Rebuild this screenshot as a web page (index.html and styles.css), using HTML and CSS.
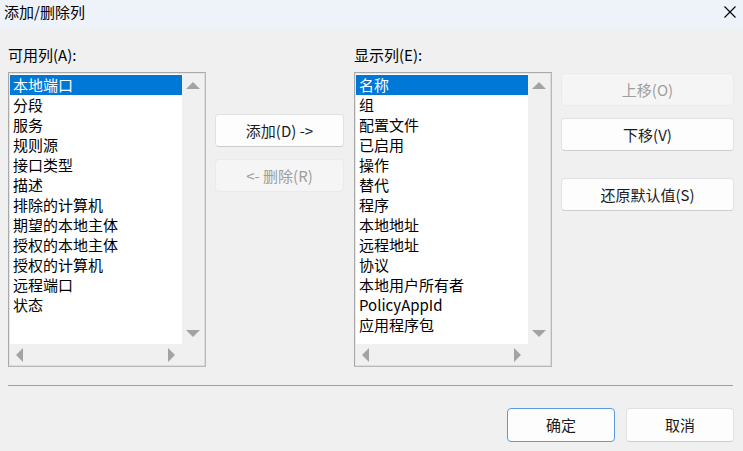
FILE: index.html
```html
<!DOCTYPE html>
<html lang="zh-CN">
<head>
<meta charset="utf-8">
<title>添加/删除列</title>
<link rel="stylesheet" href="styles.css">
</head>
<body>
<div class="dialog">
  <div class="titlebar">
    <span class="title">添加/删除列</span>
    <svg class="close" width="12" height="12" viewBox="0 0 12 12"><path d="M0.5 0.5 L11.5 11.5 M11.5 0.5 L0.5 11.5" stroke="#000" stroke-width="1.1" fill="none"/></svg>
  </div>
  <div class="body">
    <div class="main">
      <div class="col">
        <div class="label">可用列(A):</div>
        <div class="listbox">
          <ul class="items">
            <li class="sel">本地端口</li>
            <li>分段</li>
            <li>服务</li>
            <li>规则源</li>
            <li>接口类型</li>
            <li>描述</li>
            <li>排除的计算机</li>
            <li>期望的本地主体</li>
            <li>授权的本地主体</li>
            <li>授权的计算机</li>
            <li>远程端口</li>
            <li>状态</li>
          </ul>
          <div class="vscroll"><span class="arr up"></span><span class="arr down"></span></div>
          <div class="hscroll"><span class="arr left"></span><span class="arr right"></span></div>
          <div class="corner"></div>
        </div>
      </div>
      <div class="midcol">
        <button class="btn">添加(D) -&gt;</button>
        <button class="btn disabled">&lt;- 删除(R)</button>
      </div>
      <div class="col">
        <div class="label">显示列(E):</div>
        <div class="listbox">
          <ul class="items">
            <li class="sel">名称</li>
            <li>组</li>
            <li>配置文件</li>
            <li>已启用</li>
            <li>操作</li>
            <li>替代</li>
            <li>程序</li>
            <li>本地地址</li>
            <li>远程地址</li>
            <li>协议</li>
            <li>本地用户所有者</li>
            <li>PolicyAppId</li>
            <li>应用程序包</li>
          </ul>
          <div class="vscroll"><span class="arr up"></span><span class="arr down"></span></div>
          <div class="hscroll"><span class="arr left"></span><span class="arr right"></span></div>
          <div class="corner"></div>
        </div>
      </div>
      <div class="sidecol">
        <button class="btn disabled">上移(O)</button>
        <button class="btn">下移(V)</button>
        <button class="btn gap">还原默认值(S)</button>
      </div>
    </div>
    <div class="sep"></div>
    <div class="footer">
      <button class="btn fbtn default">确定</button>
      <button class="btn fbtn">取消</button>
    </div>
  </div>
</div>
</body>
</html>
```

FILE: styles.css
```css
* { box-sizing: border-box; }
html, body { margin: 0; padding: 0; }
body {
  width: 743px;
  height: 451px;
  overflow: hidden;
  background: #f0f0f0;
  font-family: "Noto Sans CJK SC", "Noto Sans", sans-serif;
  font-size: 15px;
  color: #000;
}
.dialog { width: 743px; height: 451px; }
.titlebar {
  height: 29px;
  background: #eef3f9;
  display: flex;
  align-items: center;
  justify-content: space-between;
  padding: 0 7px 6px 4px;
}
.title { line-height: 20px; }
.close { display: block; margin-top: 1px; }

.body { padding: 16px 9px 0 8px; }
.main { display: flex; align-items: flex-start; }
.col { width: 198px; display: flex; flex-direction: column; }
.label { height: 27px; line-height: 20px; }
.listbox {
  height: 295px;
  border: 1px solid #a9a9a9;
  border-right-color: #b8b8b8;
  border-bottom-color: #b8b8b8;
  box-shadow: inset 1px 1px 0 #e6e6e6, inset -1px -1px 0 #dcdcdc;
  padding: 1px;
  display: grid;
  grid-template-columns: 172px 22px;
  grid-template-rows: 270px 21px;
  background: #fff;
}
.items {
  list-style: none;
  margin: 0;
  padding: 1px 0 0 0;
  background: #fff;
  overflow: hidden;
}
.items li {
  height: 20px;
  line-height: 20px;
  padding-left: 3px;
  white-space: nowrap;
}
.items li.sel { background: #0078d7; color: #fff; }
.vscroll, .hscroll, .corner { background: #f0f0f0; position: relative; }
.arr { position: absolute; width: 0; height: 0; }
.arr.up {
  left: 4px; top: 8px;
  border-left: 7px solid transparent;
  border-right: 7px solid transparent;
  border-bottom: 7px solid #a3a3a3;
}
.arr.down {
  left: 4px; bottom: 7px;
  border-left: 7px solid transparent;
  border-right: 7px solid transparent;
  border-top: 7px solid #a3a3a3;
}
.arr.left {
  left: 6px; top: 4px;
  border-top: 7px solid transparent;
  border-bottom: 7px solid transparent;
  border-right: 7px solid #a3a3a3;
}
.arr.right {
  right: 7px; top: 4px;
  border-top: 7px solid transparent;
  border-bottom: 7px solid transparent;
  border-left: 7px solid #a3a3a3;
}

.btn {
  font-family: inherit;
  font-size: 15px;
  color: #1b1b1b;
  background: #fdfdfd;
  border: 1px solid #e2e2e2;
  border-bottom-color: #cdcdcd;
  border-radius: 4px;
  height: 33px;
  line-height: 20px;
  padding: 0;
  margin: 0;
  display: block;
}
.btn.disabled {
  background: #f5f5f5;
  border-color: #eaeaea;
  color: #9d9d9d;
}
.midcol {
  width: 129px;
  margin: 69px 10px 0 9px;
  display: flex;
  flex-direction: column;
  gap: 12px;
}
.midcol .btn { width: 129px; }
.sidecol {
  width: 173px;
  margin: 28px 0 0 9px;
  display: flex;
  flex-direction: column;
  gap: 12px;
}
.sidecol .btn { width: 173px; }
.sidecol .btn.gap { margin-top: 15px; }

.sep {
  height: 1px;
  background: #a0a0a0;
  margin-top: 18px;
  width: 725px;
}
.footer {
  display: flex;
  justify-content: flex-end;
  gap: 11px;
  margin-top: 22px;
  padding-right: 0;
}
.fbtn { width: 108px; height: 34px; }
.fbtn.default { border: 1px solid #5a9be0; }
```
